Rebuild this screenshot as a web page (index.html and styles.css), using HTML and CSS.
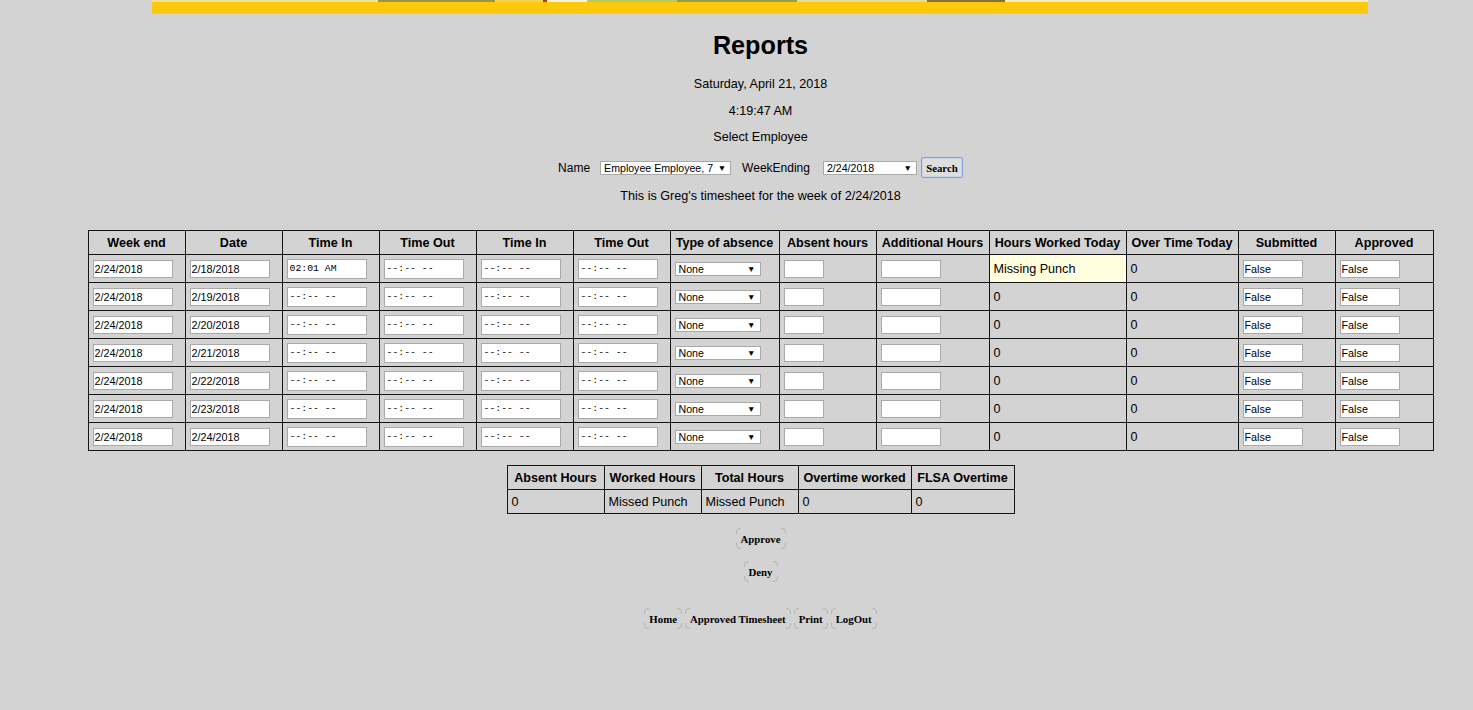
FILE: index.html
```html
<!DOCTYPE html>
<html>
<head>
<meta charset="utf-8">
<title>Reports</title>
<link rel="stylesheet" href="styles.css">
</head>
<body>
<div class="page">
  <div class="banner">
    <div class="banner-top">
      <span class="seg s1"></span><span class="seg s2"></span><span class="seg s3"></span><span class="seg s4"></span><span class="seg s5"></span><span class="seg s6"></span><span class="seg s7"></span><span class="seg s8"></span><span class="seg s9"></span><span class="seg s10"></span>
    </div>
  </div>

  <h1 class="title">Reports</h1>
  <p class="line l-date">Saturday, April 21, 2018</p>
  <p class="line l-time">4:19:47 AM</p>
  <p class="line l-select">Select Employee</p>

  <div class="filter">
    <span class="lbl lbl-name">Name</span>
    <span class="sel sel-name"><span class="sel-text">Employee Employee, 7</span><span class="arr">&#9660;</span></span>
    <span class="lbl lbl-week">WeekEnding</span>
    <span class="sel sel-week"><span class="sel-text">2/24/2018</span><span class="arr">&#9660;</span></span>
    <button class="search">Search</button>
  </div>

  <p class="line l-info">This is Greg's timesheet for the week of 2/24/2018</p>

  <table class="ts">
    <colgroup>
      <col style="width:97px"><col style="width:97px"><col style="width:97px"><col style="width:97px"><col style="width:97px"><col style="width:97px"><col style="width:109px"><col style="width:97px"><col style="width:113px"><col style="width:137px"><col style="width:112px"><col style="width:97px"><col style="width:98px">
    </colgroup>
    <thead>
      <tr>
        <th>Week end</th><th>Date</th><th>Time In</th><th>Time Out</th><th>Time In</th><th>Time Out</th><th>Type of absence</th><th>Absent hours</th><th>Additional Hours</th><th>Hours Worked Today</th><th>Over Time Today</th><th>Submitted</th><th>Approved</th>
      </tr>
    </thead>
    <tbody>
      <tr>
        <td><input class="in in-date" type="text" value="2/24/2018"></td>
        <td><input class="in in-date" type="text" value="2/18/2018"></td>
        <td class="tc"><input class="in in-time" type="text" value="02:01 AM"></td>
        <td class="tc"><input class="in in-time" type="text" value="--:-- --"></td>
        <td class="tc"><input class="in in-time" type="text" value="--:-- --"></td>
        <td class="tc"><input class="in in-time" type="text" value="--:-- --"></td>
        <td><span class="sel sel-abs"><span class="sel-text">None</span><span class="arr">&#9660;</span></span></td>
        <td><input class="in in-abs" type="text" value=""></td>
        <td><input class="in in-add" type="text" value=""></td>
        <td class="miss">Missing Punch</td>
        <td>0</td>
        <td><input class="in in-bool" type="text" value="False"></td>
        <td><input class="in in-bool" type="text" value="False"></td>
      </tr>
      <tr>
        <td><input class="in in-date" type="text" value="2/24/2018"></td>
        <td><input class="in in-date" type="text" value="2/19/2018"></td>
        <td class="tc"><input class="in in-time" type="text" value="--:-- --"></td>
        <td class="tc"><input class="in in-time" type="text" value="--:-- --"></td>
        <td class="tc"><input class="in in-time" type="text" value="--:-- --"></td>
        <td class="tc"><input class="in in-time" type="text" value="--:-- --"></td>
        <td><span class="sel sel-abs"><span class="sel-text">None</span><span class="arr">&#9660;</span></span></td>
        <td><input class="in in-abs" type="text" value=""></td>
        <td><input class="in in-add" type="text" value=""></td>
        <td>0</td>
        <td>0</td>
        <td><input class="in in-bool" type="text" value="False"></td>
        <td><input class="in in-bool" type="text" value="False"></td>
      </tr>
      <tr>
        <td><input class="in in-date" type="text" value="2/24/2018"></td>
        <td><input class="in in-date" type="text" value="2/20/2018"></td>
        <td class="tc"><input class="in in-time" type="text" value="--:-- --"></td>
        <td class="tc"><input class="in in-time" type="text" value="--:-- --"></td>
        <td class="tc"><input class="in in-time" type="text" value="--:-- --"></td>
        <td class="tc"><input class="in in-time" type="text" value="--:-- --"></td>
        <td><span class="sel sel-abs"><span class="sel-text">None</span><span class="arr">&#9660;</span></span></td>
        <td><input class="in in-abs" type="text" value=""></td>
        <td><input class="in in-add" type="text" value=""></td>
        <td>0</td>
        <td>0</td>
        <td><input class="in in-bool" type="text" value="False"></td>
        <td><input class="in in-bool" type="text" value="False"></td>
      </tr>
      <tr>
        <td><input class="in in-date" type="text" value="2/24/2018"></td>
        <td><input class="in in-date" type="text" value="2/21/2018"></td>
        <td class="tc"><input class="in in-time" type="text" value="--:-- --"></td>
        <td class="tc"><input class="in in-time" type="text" value="--:-- --"></td>
        <td class="tc"><input class="in in-time" type="text" value="--:-- --"></td>
        <td class="tc"><input class="in in-time" type="text" value="--:-- --"></td>
        <td><span class="sel sel-abs"><span class="sel-text">None</span><span class="arr">&#9660;</span></span></td>
        <td><input class="in in-abs" type="text" value=""></td>
        <td><input class="in in-add" type="text" value=""></td>
        <td>0</td>
        <td>0</td>
        <td><input class="in in-bool" type="text" value="False"></td>
        <td><input class="in in-bool" type="text" value="False"></td>
      </tr>
      <tr>
        <td><input class="in in-date" type="text" value="2/24/2018"></td>
        <td><input class="in in-date" type="text" value="2/22/2018"></td>
        <td class="tc"><input class="in in-time" type="text" value="--:-- --"></td>
        <td class="tc"><input class="in in-time" type="text" value="--:-- --"></td>
        <td class="tc"><input class="in in-time" type="text" value="--:-- --"></td>
        <td class="tc"><input class="in in-time" type="text" value="--:-- --"></td>
        <td><span class="sel sel-abs"><span class="sel-text">None</span><span class="arr">&#9660;</span></span></td>
        <td><input class="in in-abs" type="text" value=""></td>
        <td><input class="in in-add" type="text" value=""></td>
        <td>0</td>
        <td>0</td>
        <td><input class="in in-bool" type="text" value="False"></td>
        <td><input class="in in-bool" type="text" value="False"></td>
      </tr>
      <tr>
        <td><input class="in in-date" type="text" value="2/24/2018"></td>
        <td><input class="in in-date" type="text" value="2/23/2018"></td>
        <td class="tc"><input class="in in-time" type="text" value="--:-- --"></td>
        <td class="tc"><input class="in in-time" type="text" value="--:-- --"></td>
        <td class="tc"><input class="in in-time" type="text" value="--:-- --"></td>
        <td class="tc"><input class="in in-time" type="text" value="--:-- --"></td>
        <td><span class="sel sel-abs"><span class="sel-text">None</span><span class="arr">&#9660;</span></span></td>
        <td><input class="in in-abs" type="text" value=""></td>
        <td><input class="in in-add" type="text" value=""></td>
        <td>0</td>
        <td>0</td>
        <td><input class="in in-bool" type="text" value="False"></td>
        <td><input class="in in-bool" type="text" value="False"></td>
      </tr>
      <tr>
        <td><input class="in in-date" type="text" value="2/24/2018"></td>
        <td><input class="in in-date" type="text" value="2/24/2018"></td>
        <td class="tc"><input class="in in-time" type="text" value="--:-- --"></td>
        <td class="tc"><input class="in in-time" type="text" value="--:-- --"></td>
        <td class="tc"><input class="in in-time" type="text" value="--:-- --"></td>
        <td class="tc"><input class="in in-time" type="text" value="--:-- --"></td>
        <td><span class="sel sel-abs"><span class="sel-text">None</span><span class="arr">&#9660;</span></span></td>
        <td><input class="in in-abs" type="text" value=""></td>
        <td><input class="in in-add" type="text" value=""></td>
        <td>0</td>
        <td>0</td>
        <td><input class="in in-bool" type="text" value="False"></td>
        <td><input class="in in-bool" type="text" value="False"></td>
      </tr>
    </tbody>
  </table>

  <table class="sum">
    <colgroup>
      <col style="width:97px"><col style="width:97px"><col style="width:97px"><col style="width:113px"><col style="width:103px">
    </colgroup>
    <thead>
      <tr><th>Absent Hours</th><th>Worked Hours</th><th>Total Hours</th><th>Overtime worked</th><th>FLSA Overtime</th></tr>
    </thead>
    <tbody>
      <tr><td>0</td><td>Missed Punch</td><td>Missed Punch</td><td>0</td><td>0</td></tr>
    </tbody>
  </table>

  <div class="actions">
    <button class="btn">Approve</button>
    <button class="btn">Deny</button>
  </div>

  <nav class="nav">
    <button class="btn">Home</button>
    <button class="btn">Approved Timesheet</button>
    <button class="btn">Print</button>
    <button class="btn">LogOut</button>
  </nav>
</div>
</body>
</html>
```

FILE: styles.css
```css
html, body {
  margin: 0;
  padding: 0;
  overflow: hidden;
  background: #d3d3d3;
}

body {
  font-family: "Liberation Sans", Arial, sans-serif;
  font-size: 12.6px;
  color: #000;
}

.page {
  width: 1521px;
  display: flex;
  flex-direction: column;
  align-items: center;
}

/* banner */
.banner {
  align-self: flex-start;
  margin-left: 152px;
  width: 1216px;
  height: 14px;
  background: #fdc90c;
}

.banner-top {
  display: flex;
  height: 2px;
}

.seg { display: block; height: 2px; }
.s1 { width: 226px; background: #f3e2a0; }
.s2 { width: 117px; background: #9a9448; }
.s3 { width: 48px; background: #f4d25a; }
.s4 { width: 4px; background: #b4341c; }
.s5 { width: 40px; background: #f8f2e0; }
.s6 { width: 90px; background: #b3cc6a; }
.s7 { width: 120px; background: #8ba050; }
.s8 { width: 130px; background: #e2d9a8; }
.s9 { width: 78px; background: #85703c; }
.s10 { flex: 1; background: #f6ebc2; }

.title {
  margin: 16px 0 0;
  font-size: 25.2px;
  line-height: 30px;
  font-weight: bold;
}

.line {
  margin: 0;
  line-height: 16px;
}

.l-date { margin-top: 16px; }
.l-time { margin-top: 11px; }
.l-select { margin-top: 10px; }
.l-info { margin-top: 10px; }

/* filter row */
.filter {
  margin-top: 12px;
  height: 21px;
  display: flex;
  align-items: center;
}

.lbl {
  font-size: 12px;
}

.lbl-name { margin-right: 10px; }
.lbl-week { margin-left: 11px; margin-right: 13px; }

.sel {
  box-sizing: border-box;
  display: inline-flex;
  align-items: center;
  justify-content: space-between;
  height: 14px;
  background: #fff;
  border: 1px solid #a9a9a9;
  font-size: 10.6px;
  line-height: 12px;
  padding: 0 4px 0 3px;
  color: #000;
}

.arr {
  font-size: 8.5px;
  line-height: 12px;
}

.sel-name { width: 131px; }
.sel-week { width: 94px; margin-right: 4px; }

.search {
  box-sizing: border-box;
  height: 21px;
  width: 42px;
  padding: 0;
  margin: 0;
  font-family: "Liberation Serif", "Times New Roman", serif;
  font-weight: bold;
  font-size: 10.8px;
  background: #dedede;
  border: 1px solid #7f9fd6;
  border-radius: 2px;
  box-shadow: inset 0 0 0 1px #c9d6ee;
  color: #000;
}

/* main timesheet table */
.ts {
  margin-top: 26px;
  border-collapse: collapse;
  table-layout: fixed;
  width: 1346px;
}

.ts th,
.ts td,
.sum th,
.sum td {
  border: 1px solid #151515;
  padding: 0 4px;
  text-align: left;
  white-space: nowrap;
  overflow: hidden;
}

.ts th {
  height: 23px;
  text-align: center;
  font-weight: bold;
  font-size: 12.6px;
}

.ts td {
  height: 27px;
}

.ts td.miss {
  background: #ffffe0;
}

.in {
  box-sizing: border-box;
  display: block;
  margin: 0;
  background: #fff;
  border: 1px solid #a9a9a9;
  font-family: "Liberation Sans", Arial, sans-serif;
  font-size: 10.8px;
  color: #000;
  padding: 0 1px;
  height: 18px;
}

.in-date { width: 80px; }
.in-abs { width: 40px; }
.in-add { width: 60px; }
.in-bool { width: 60px; }

.in-time {
  width: 80px;
  height: 20px;
  font-family: "Liberation Mono", "Courier New", monospace;
  font-size: 9.8px;
  padding: 0 2px;
  color: #000;
}

.sel-abs { width: 86px; }

/* summary table */
.sum {
  margin-top: 14px;
  border-collapse: collapse;
  table-layout: fixed;
  width: 508px;
}

.sum th {
  height: 23px;
  text-align: center;
  font-weight: bold;
}

.sum td {
  height: 23px;
}

/* buttons */
.btn {
  position: relative;
  box-sizing: border-box;
  height: 21px;
  margin: 0;
  padding: 0 4px;
  background: transparent;
  border: 1px solid #b4b4b4;
  border-radius: 4px;
  font-family: "Liberation Serif", "Times New Roman", serif;
  font-weight: bold;
  font-size: 10.8px;
  color: #000;
}

.btn::before,
.btn::after {
  content: "";
  position: absolute;
  pointer-events: none;
}

.btn::before {
  top: -1px;
  bottom: -1px;
  left: 4px;
  right: 4px;
  border-top: 1px solid #d3d3d3;
  border-bottom: 1px solid #d3d3d3;
}

.btn::after {
  left: -1px;
  right: -1px;
  top: 5px;
  bottom: 5px;
  border-left: 1px solid #d3d3d3;
  border-right: 1px solid #d3d3d3;
}

.actions {
  margin-top: 14px;
  display: flex;
  flex-direction: column;
  align-items: center;
  gap: 12px;
}

.nav {
  margin-top: 26px;
  display: flex;
  gap: 3px;
}
```
